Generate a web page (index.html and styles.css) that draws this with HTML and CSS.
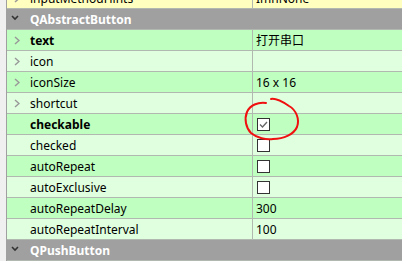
FILE: index.html
```html
<!DOCTYPE html>
<html lang="zh-CN">
<head>
  <meta charset="UTF-8">
  <title>Property Editor</title>
  <link rel="stylesheet" href="styles.css">
</head>
<body>
  <div class="editor">
    <div class="gutter"></div>
    <div class="props">
      <div class="row yellow">
        <div class="name">
          <svg class="arrow" width="6" height="9" viewBox="0 0 6 9"><path d="M1 1 L5 4.5 L1 8" fill="none" stroke="#999" stroke-width="1.5"/></svg>
          inputMethodHints
        </div>
        <div class="value">ImhNone</div>
      </div>

      <div class="row group">
        <div class="name">
          <svg class="caret" width="8" height="6" viewBox="0 0 8 6"><path d="M1 1 L4 4 L7 1" fill="none" stroke="#333" stroke-width="1.6"/></svg>
          QAbstractButton
        </div>
        <div class="value"></div>
      </div>

      <div class="row green">
        <div class="name bold">
          <svg class="arrow" width="6" height="9" viewBox="0 0 6 9"><path d="M1 1 L5 4.5 L1 8" fill="none" stroke="#999" stroke-width="1.5"/></svg>
          text
        </div>
        <div class="value">打开串口</div>
      </div>
      <div class="row green alt">
        <div class="name">
          <svg class="arrow" width="6" height="9" viewBox="0 0 6 9"><path d="M1 1 L5 4.5 L1 8" fill="none" stroke="#999" stroke-width="1.5"/></svg>
          icon
        </div>
        <div class="value"></div>
      </div>
      <div class="row green">
        <div class="name">
          <svg class="arrow" width="6" height="9" viewBox="0 0 6 9"><path d="M1 1 L5 4.5 L1 8" fill="none" stroke="#999" stroke-width="1.5"/></svg>
          iconSize
        </div>
        <div class="value">16 x 16</div>
      </div>
      <div class="row green alt">
        <div class="name">
          <svg class="arrow" width="6" height="9" viewBox="0 0 6 9"><path d="M1 1 L5 4.5 L1 8" fill="none" stroke="#999" stroke-width="1.5"/></svg>
          shortcut
        </div>
        <div class="value"></div>
      </div>
      <div class="row green">
        <div class="name bold">checkable</div>
        <div class="value">
          <span class="check">
            <svg width="11" height="11" viewBox="0 0 11 11"><path d="M2 5.5 L4.5 8 L9 3" fill="none" stroke="#666" stroke-width="1.3"/></svg>
          </span>
        </div>
      </div>
      <div class="row green alt">
        <div class="name">checked</div>
        <div class="value"><span class="check"></span></div>
      </div>
      <div class="row green">
        <div class="name">autoRepeat</div>
        <div class="value"><span class="check"></span></div>
      </div>
      <div class="row green alt">
        <div class="name">autoExclusive</div>
        <div class="value"><span class="check"></span></div>
      </div>
      <div class="row green">
        <div class="name">autoRepeatDelay</div>
        <div class="value">300</div>
      </div>
      <div class="row green alt">
        <div class="name">autoRepeatInterval</div>
        <div class="value">100</div>
      </div>

      <div class="row group">
        <div class="name">
          <svg class="caret" width="8" height="6" viewBox="0 0 8 6"><path d="M1 1 L4 4 L7 1" fill="none" stroke="#333" stroke-width="1.6"/></svg>
          QPushButton
        </div>
        <div class="value"></div>
      </div>
    </div>

    <!-- hand-drawn annotation -->
    <svg class="mark" width="65" height="50" viewBox="0 0 65 50">
      <path d="M26,8 C18,7 10,10 7,17 C4,24 6,33 11,38 C17,43 26,45 33,44 C44,44 54,39 57,32 C60,24 56,15 49,11 C43,7 36,3 31,4"
            fill="none" stroke="#f01010" stroke-width="2" stroke-linecap="round"/>
    </svg>
  </div>
</body>
</html>
```

FILE: styles.css
```css
* {
  margin: 0;
  padding: 0;
  box-sizing: border-box;
}

body {
  font-family: "Noto Sans", "Noto Sans CJK SC", sans-serif;
  font-size: 12px;
  color: #000;
  background: #fff;
  overflow: hidden;
}

.editor {
  position: relative;
  display: flex;
  margin-top: -12px;
}

.gutter {
  width: 7px;
  flex-shrink: 0;
  background: #f0f0f0;
  border-right: 1px solid #a0a0a0;
}

.props {
  flex: 1;
}

.row {
  display: flex;
  height: 21px;
  border-bottom: 1px solid #b0b8b0;
}

.name {
  width: 246px;
  flex-shrink: 0;
  display: flex;
  align-items: center;
  padding-left: 23px;
  border-right: 1px solid #b0b8b0;
  position: relative;
  white-space: nowrap;
}

.value {
  flex: 1;
  display: flex;
  align-items: center;
  padding-left: 3px;
  white-space: nowrap;
}

.bold {
  font-weight: bold;
}

.arrow {
  position: absolute;
  left: 7px;
  top: 6px;
}

.yellow {
  background: #ffffbf;
}

.green {
  background: #bfffbf;
}

.green.alt {
  background: #dfffdf;
}

.group {
  background: #a0a0a0;
  color: #fff;
  font-weight: bold;
}

.group .name {
  border-right: none;
}

.caret {
  position: absolute;
  left: 4px;
  top: 6px;
}

.check {
  width: 13px;
  height: 13px;
  border: 1px solid #333;
  background: #fff;
  display: flex;
  align-items: center;
  justify-content: center;
  align-self: flex-start;
  margin-top: 4px;
  margin-left: 1px;
}

.mark {
  position: absolute;
  left: 240px;
  top: 107px;
}
```
